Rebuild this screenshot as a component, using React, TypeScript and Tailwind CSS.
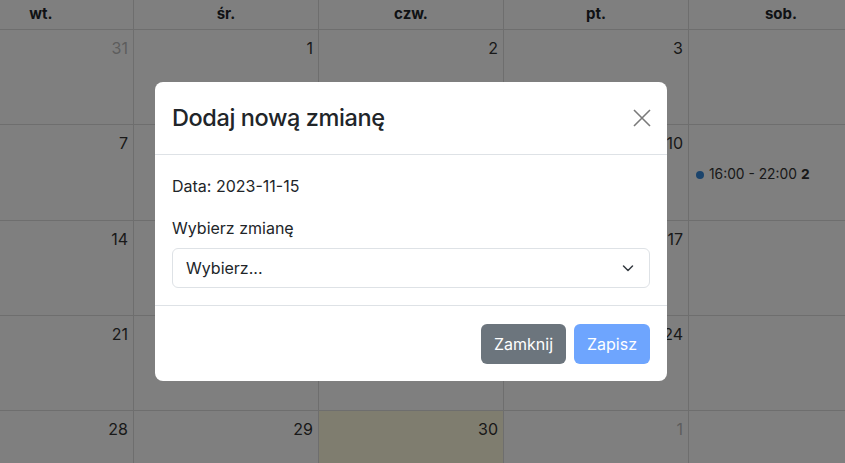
import React from "react";

const days = ["wt.", "śr.", "czw.", "pt.", "sob."];
type Cell = { n: string; other?: boolean; today?: boolean; event?: boolean };
const weeks: Cell[][] = [
  [{ n: "31", other: true }, { n: "1" }, { n: "2" }, { n: "3" }, { n: "4" }],
  [{ n: "7" }, { n: "8" }, { n: "9" }, { n: "10" }, { n: "11", event: true }],
  [{ n: "14" }, { n: "15" }, { n: "16" }, { n: "17" }, { n: "18" }],
  [{ n: "21" }, { n: "22" }, { n: "23" }, { n: "24" }, { n: "25" }],
  [{ n: "28" }, { n: "29" }, { n: "30", today: true }, { n: "1", other: true }, { n: "2", other: true }],
];

export default function App() {
  return (
    <div
      className="relative w-[845px] h-[463px] overflow-hidden bg-white text-[#212529]"
      style={{ fontFamily: "Inter, 'Noto Sans', sans-serif" }}
    >
      <div className="-ml-[51px] w-[925px]">
        <div className="flex h-[30px] border-b border-[#dddddd]">
          {days.map((d) => (
            <div
              key={d}
              className="w-[185px] shrink-0 border-r border-[#dddddd] flex items-center justify-center text-[15px] font-bold"
            >
              {d}
            </div>
          ))}
        </div>
        {weeks.map((w, i) => (
          <div key={i} className="flex h-[95.3px] border-b border-[#dddddd]">
            {w.map((c, j) => (
              <div
                key={j}
                className={
                  "w-[185px] shrink-0 border-r border-[#dddddd] flex flex-col " +
                  (c.today ? "bg-[#fffadf]" : "")
                }
              >
                <div
                  className={
                    "text-right pr-[5px] pt-[6px] text-[16px] leading-6 " +
                    (c.other ? "text-[#bbbbbb]" : "text-[#333333]")
                  }
                >
                  {c.n}
                </div>
                {c.event && (
                  <div className="flex items-center mt-[9px] pl-[7px] text-[13.8px] text-[#333333]">
                    <span className="w-[8px] h-[8px] rounded-full bg-[#3788d8] mr-[5px]" />
                    <span>16:00 - 22:00</span>
                    <span className="font-bold ml-[4px]">2</span>
                  </div>
                )}
              </div>
            ))}
          </div>
        ))}
      </div>

      <div className="absolute inset-0 bg-black/50 pt-[82px] pl-[155px]">
        <div className="w-[512px] bg-white rounded-[8px] text-[#212529]">
          <div className="h-[73px] flex items-center justify-between pl-[17px] pr-[16px] border-b border-[#dee2e6]">
            <div className="text-[23.5px] font-medium tracking-[-0.4px]">Dodaj nową zmianę</div>
            <svg width="20" height="20" viewBox="0 0 20 20" className="mr-[-1px]">
              <path d="M2 2 L18 18 M18 2 L2 18" stroke="#7a7a7a" strokeWidth="1.6" fill="none" />
            </svg>
          </div>
          <div className="px-[17px] pt-[19px] pb-[17px] border-b border-[#dee2e6] text-[16px]">
            <div className="leading-6">Data: 2023-11-15</div>
            <div className="leading-6 mt-[18px]">Wybierz zmianę</div>
            <div className="mt-[8px] h-[40px] rounded-[6px] border border-[#dee2e6] flex items-center justify-between pl-[13px] pr-[15px]">
              <span>Wybierz...</span>
              <svg width="12" height="8" viewBox="0 0 12 8">
                <path d="M1.5 2 L6 6.5 L10.5 2" stroke="#343a40" strokeWidth="1.5" fill="none" strokeLinecap="round" strokeLinejoin="round" />
              </svg>
            </div>
          </div>
          <div className="h-[75px] flex items-center justify-end gap-[8px] pr-[17px]">
            <div className="h-[40px] px-[13px] rounded-[6px] bg-[#6c757d] text-white text-[16px] flex items-center">
              Zamknij
            </div>
            <div className="h-[40px] px-[13px] rounded-[6px] bg-[#6ea5fe] text-white text-[16px] flex items-center">
              Zapisz
            </div>
          </div>
        </div>
      </div>
    </div>
  );
}
